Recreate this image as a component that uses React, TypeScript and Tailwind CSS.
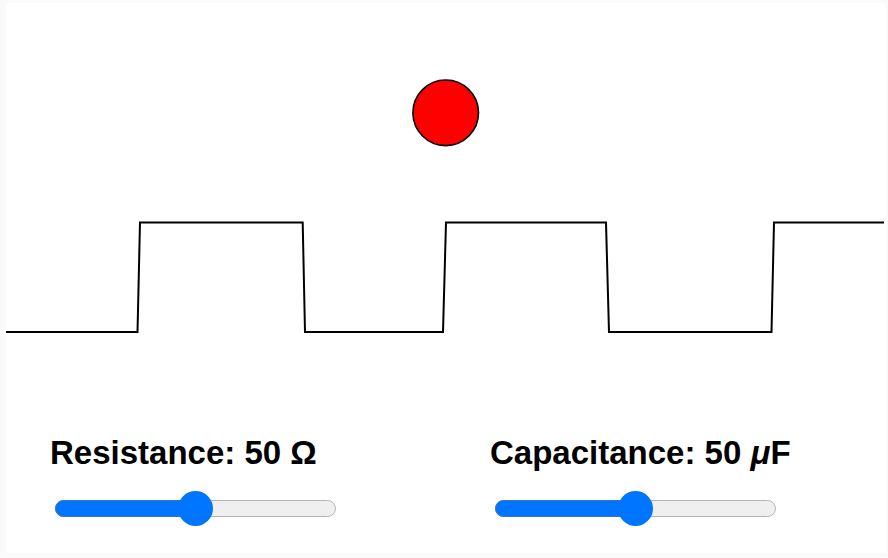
import React from "react";

// Forme d'onde carrée (coordonnées relatives à la carte)
const WAVE =
  "0,329 131.5,329 134,219.5 296.7,219.5 299,329 437,329 440,219.5 600,219.5 603,329 765.5,329 768,219.5 878,219.5";

function Slider({ pct }: { pct: number }) {
  const trackW = 281;
  const thumb = 35;
  const thumbLeft = (trackW - thumb) * pct;
  return (
    <div className="relative ml-[5px] h-[35px] w-[281px]">
      <div className="absolute inset-x-0 top-[9px] h-[17px] rounded-full border border-[#b3b3b3] bg-[#efefef]" />
      <div
        className="absolute left-0 top-[9px] h-[17px] rounded-full border border-[#3f6ec6] bg-[#0075ff]"
        style={{ width: thumbLeft + thumb / 2 }}
      />
      <div
        className="absolute top-0 size-[35px] rounded-full bg-[#0075ff]"
        style={{ left: thumbLeft }}
      />
    </div>
  );
}

function Control({ label, pct }: { label: React.ReactNode; pct: number }) {
  return (
    <div className="flex flex-col pl-[44px]">
      <div className="text-[33px] leading-[38px] font-bold text-black">{label}</div>
      <div className="mt-[19px]">
        <Slider pct={pct} />
      </div>
    </div>
  );
}

export default function App() {
  return (
    <div
      className="h-[558px] w-[888px] bg-[#fafafa] pl-[6px] pt-[3px]"
      style={{ fontFamily: '"Liberation Sans", Arial, Helvetica, sans-serif' }}
    >
      <div className="flex h-[550px] w-[880px] flex-col bg-white">
        <svg width="880" height="420" viewBox="0 0 880 420" className="block">
          <circle cx="439.7" cy="109.8" r="32.8" fill="#ff0000" stroke="#000" strokeWidth="1.6" />
          <polyline points={WAVE} fill="none" stroke="#000" strokeWidth="2" strokeLinejoin="miter" />
        </svg>
        <div className="mt-[11px] grid grid-cols-2">
          <Control label={<>Resistance: 50 Ω</>} pct={0.5} />
          <Control
            label={
              <>
                Capacitance: 50 <i>μ</i>F
              </>
            }
            pct={0.5}
          />
        </div>
      </div>
    </div>
  );
}
